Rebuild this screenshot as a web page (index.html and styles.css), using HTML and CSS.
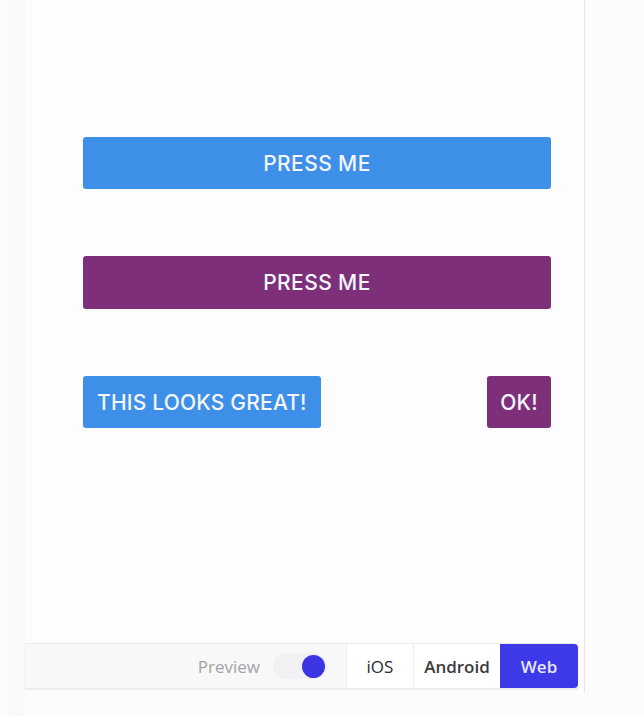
FILE: index.html
```html
<!DOCTYPE html>
<html>
<head>
<meta charset="utf-8">
<link rel="stylesheet" href="styles.css">
</head>
<body>
<div class="stage">
  <div class="gutter"></div>
  <div class="panel">
    <div class="content">
      <button class="btn btn-blue btn-full">PRESS ME</button>
      <button class="btn btn-purple btn-full">PRESS ME</button>
      <div class="row">
        <button class="btn btn-blue">THIS LOOKS GREAT!</button>
        <button class="btn btn-purple btn-ok">OK!</button>
      </div>
    </div>
    <div class="toolbar">
      <span class="preview">Preview</span>
      <span class="toggle"><span class="knob"></span></span>
      <span class="seg">iOS</span>
      <span class="seg seg-android">Android</span>
      <span class="seg seg-web">Web</span>
    </div>
  </div>
</div>
</body>
</html>
```
FILE: styles.css
```css
html, body {
  margin: 0;
  padding: 0;
  background: #fdfcfd;
  font-family: "Inter", "Liberation Sans", sans-serif;
}
.stage {
  display: flex;
  height: 716px;
}
.gutter {
  width: 25px;
  background: linear-gradient(to right, #fdfcfd 0, #faf9fa 70%, #f9f8fa 100%);
}
.panel {
  width: 559px;
  border-right: 1px solid #e4e4e6;
  display: flex;
  flex-direction: column;
  height: 692px;
  background: #fdfcfe;
}
.content {
  flex: 1;
  padding: 137px 33px 0 58px;
  display: flex;
  flex-direction: column;
  gap: 67px;
}
.btn {
  border: none;
  border-radius: 3px;
  color: #f4f6fb;
  font-family: "Inter", "Liberation Sans", sans-serif;
  font-size: 21px;
  font-weight: 500;
  height: 52px;
  padding: 0 14px;
  letter-spacing: 0.2px;
}
.btn-full {
  width: 100%;
  letter-spacing: 0.4px;
}
.btn-blue {
  background: #3d8fe8;
}
.btn-purple {
  background: #7d3079;
  height: 53px;
}
.row {
  display: flex;
  justify-content: space-between;
}
.row .btn {
  height: 52px;
}
.btn-ok {
  padding: 0 12px;
  min-width: 64px;
}
.toolbar {
  height: 44px;
  margin-right: 6px;
  margin-bottom: 4px;
  border-top: 1px solid #ececee;
  box-shadow: 0 2px 2px rgba(0,0,0,0.08);
  background: #f8f8f9;
  display: flex;
  align-items: center;
  justify-content: flex-end;
  font-family: "Open Sans", "Liberation Sans", sans-serif;
  font-size: 17px;
}
.preview {
  color: #a3a3a6;
  margin-right: 13px;
}
.toggle {
  width: 54px;
  height: 26px;
  border-radius: 13px;
  background: #f1f1f3;
  display: flex;
  align-items: center;
  justify-content: flex-end;
  padding-right: 2px;
  box-sizing: border-box;
  margin-right: 19px;
}
.knob {
  width: 23px;
  height: 23px;
  border-radius: 50%;
  background: #3b35e4;
}
.seg {
  height: 44px;
  display: flex;
  align-items: center;
  justify-content: center;
  background: #ffffff;
  width: 66px;
  color: #2a2a2e;
  font-weight: 500;
  border-left: 1px solid #eeeef0;
}
.seg-android {
  width: 86px;
  color: #3a3a3e;
  font-weight: 600;
}
.seg-web {
  width: 78px;
  background: #3d38e8;
  color: #e8e8fb;
  font-weight: 600;
  border-radius: 0 4px 4px 0;
  border-left: none;
}
```
